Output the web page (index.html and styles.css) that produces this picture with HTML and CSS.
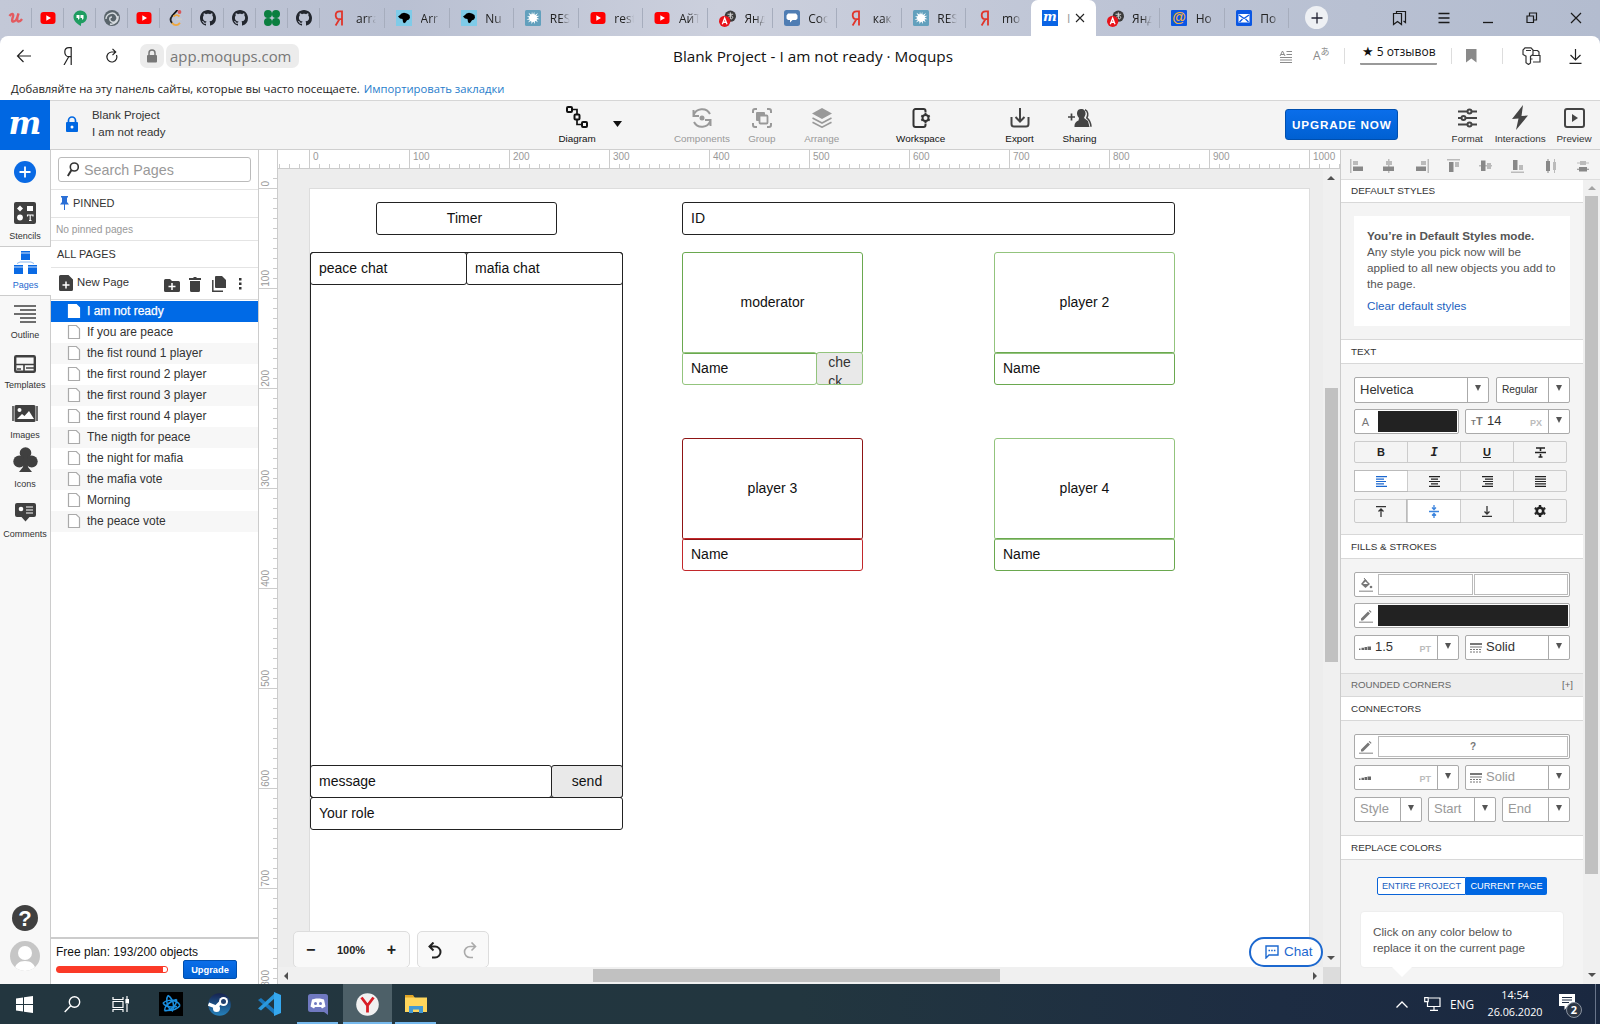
FILE: index.html
```html
<!DOCTYPE html>
<html lang="en">
<head>
<meta charset="utf-8">
<title>Blank Project - I am not ready · Moqups</title>
<link rel="stylesheet" href="styles.css">
</head>
<body>
<svg class="defs" width="0" height="0">
  <symbol id="yt" viewBox="0 0 16 16"><rect x=".5" y="2" width="15" height="12" rx="3" fill="#f00"/><path d="M6.3 5.2v5.6L11 8z" fill="#fff"/></symbol>
  <symbol id="gh" viewBox="0 0 16 16"><path fill="#22262e" d="M8 0C3.58 0 0 3.58 0 8c0 3.54 2.29 6.53 5.47 7.59.4.07.55-.17.55-.38 0-.19-.01-.82-.01-1.49-2.01.37-2.53-.49-2.69-.94-.09-.23-.48-.94-.82-1.13-.28-.15-.68-.52-.01-.53.63-.01 1.08.58 1.23.82.72 1.21 1.87.87 2.33.66.07-.52.28-.87.51-1.07-1.78-.2-3.64-.89-3.64-3.95 0-.87.31-1.59.82-2.15-.08-.2-.36-1.02.08-2.12 0 0 .67-.21 2.2.82.64-.18 1.32-.27 2-.27s1.36.09 2 .27c1.53-1.04 2.2-.82 2.2-.82.44 1.1.16 1.92.08 2.12.51.56.82 1.27.82 2.15 0 3.07-1.87 3.75-3.65 3.95.29.25.54.73.54 1.48 0 1.07-.01 1.93-.01 2.2 0 .21.15.46.55.38A8 8 0 0 0 16 8c0-4.42-3.58-8-8-8"/></symbol>
  <symbol id="ya" viewBox="0 0 16 16"><path d="M11 .5v15M11 1.3H8.600C5.900 1.300 4.700 3 4.700 5.200S6 9.200 8.500 9.200H11M8.400 9.300 4.600 15.500" fill="none" stroke="#e0352b" stroke-width="1.800"/></symbol>
  <symbol id="splat" viewBox="0 0 16 16"><path fill="#7fcbe8" d="M0 0h16v16H0z"/><path fill="#000" d="M2 6.500 4 5 5.500 3.500 8 2.800l3 .7L13.500 5 14 7.500 13 9.500l-2 .7-1.500 2.300L8 13.300 7 12 6.500 9 4 8.500z"/></symbol>
  <symbol id="burst" viewBox="0 0 16 16"><rect width="16" height="16" rx="1.500" fill="#62a0bd"/><path fill="#fff" d="m8 5 1.200-3.200.4 3.400 3.400-2.200-1.800 3 3.300-.2-3 1.700 3 1.800-3.200-.1 1.500 3-3-1.600.2 3.400-1.700-2.700-1.800 2.700-.1-3.300L3 12.500l2.200-3-3.700.4 3-2L2 6.200h3.200L3.500 2.800l3 2L7 1.800z"/><circle cx="8" cy="8" r="3.700" fill="#fff"/></symbol>
  <symbol id="trans" viewBox="0 0 18 18"><circle cx="12" cy="6.500" r="6" fill="#3b3b3b"/><path d="M9 4.500h6M12 2.500v7M9.500 8c2-3 5-2 5 0 0 1-1 1.500-2 1.500" stroke="#ddd" fill="none"/><circle cx="6" cy="12" r="6" fill="#e8131a"/><path d="M3.500 15 6 8.500 8.500 15M4.300 13h3.400" stroke="#fff" stroke-width="1.400" fill="none"/></symbol>
  <symbol id="page" viewBox="0 0 14 16"><path d="M1.500 1.500h7.800l3.200 3.200v9.800h-11z" fill="#fff" stroke="currentColor" stroke-width="1.200"/></symbol>
  <symbol id="pencil" viewBox="0 0 14 14"><path fill="#777" d="M2 9.500 9 2.500l2 2-7 7H2zM9.700 1.800l.9-.9 2 2-.9.900z"/><path fill="#aaa" d="M0 12.500h14V14H0z"/></symbol>
  <symbol id="weight" viewBox="0 0 12 6"><path fill="#666" d="M0 3.500h1.500V5H0zM2.500 2.700H5V5H2.500zM5.500 2H8v3H5.500zM8.500 1.500H12V5H8.500z"/></symbol>
  <symbol id="dashes" viewBox="0 0 12 10"><path fill="#777" d="M0 0h12v2H0zM0 3.500h12v1H0z"/><path stroke="#777" stroke-dasharray="2 1" d="M0 6.500h12M0 9h12"/></symbol>
</svg>

<div class="tabs">
  <div class="tab pin"><svg width="16" height="16" viewBox="0 0 16 16"><path d="M1.500 6c2-3 4.500-2.500 3.500.5s-1.500 5 .5 5 4-4 5-8c-1.500 4-2 8 0 8s2.500-1 3.500-2.500" fill="none" stroke="#e35a5f" stroke-width="2.400"/></svg></div>
  <div class="tab pin"><svg width="16" height="16"><use href="#yt"/></svg></div>
  <div class="tab pin"><svg width="16" height="16" viewBox="0 0 16 16"><path fill="#1f9d61" d="M8 .5a6.500 6.500 0 0 1 1 13V16c-4-2-7.500-5-7.500-9A6.500 6.500 0 0 1 8 .5"/><path fill="#fff" d="M4.500 5h3v3.500L6 10V8H4.500zM8.500 5h3v3.500L10 10V8H8.500z"/></svg></div>
  <div class="tab pin"><svg width="16" height="16" viewBox="0 0 16 16"><circle cx="8" cy="8" r="8" fill="#59646b"/><path d="M2 9c0-5 7-8 10-4s-1 8-4 7-3-5 0-5M14 6c1 5-4 9-8 8" fill="none" stroke="#d5dade" stroke-width="1.400"/></svg></div>
  <div class="tab pin"><svg width="16" height="16"><use href="#yt"/></svg></div>
  <div class="tab pin"><svg width="16" height="16" viewBox="0 0 16 16" fill="none" stroke-width="1.800"><path d="M9.500 0 4 6" stroke="#111"/><path d="M4.300 5.700C2 8.500 2 11 4.300 13" stroke="#222"/><path d="M4 12.800c2.500 3 5.500 3 8 0M5.500 6.500c2-2 4.500-1.500 6 0" stroke="#efa73c"/><path d="M8 9.300h6" stroke="#ccc"/><circle cx="11.500" cy="2" r="1.900" fill="#d8585a"/></svg></div>
  <div class="tab pin"><svg width="16" height="16"><use href="#gh"/></svg></div>
  <div class="tab pin"><svg width="16" height="16"><use href="#gh"/></svg></div>
  <div class="tab pin"><svg width="16" height="16" viewBox="0 0 16 16" fill="#0b7f3f"><circle cx="4" cy="4" r="4"/><circle cx="12" cy="4" r="4"/><circle cx="4" cy="12" r="4"/><circle cx="12" cy="12" r="4"/></svg></div>
  <div class="tab pin"><svg width="16" height="16"><use href="#gh"/></svg></div>
  <div class="tab"><svg width="16" height="16"><use href="#ya"/></svg><span>arra</span></div>
  <div class="tab"><svg width="16" height="16"><use href="#splat"/></svg><span>Arr</span></div>
  <div class="tab"><svg width="16" height="16"><use href="#splat"/></svg><span>Nu</span></div>
  <div class="tab"><svg width="16" height="16"><use href="#burst"/></svg><span>RES</span></div>
  <div class="tab"><svg width="16" height="16"><use href="#yt"/></svg><span>rest</span></div>
  <div class="tab"><svg width="16" height="16"><use href="#yt"/></svg><span>АйТ</span></div>
  <div class="tab"><svg width="17" height="17"><use href="#trans"/></svg><span>Янд</span></div>
  <div class="tab"><svg width="16" height="16" viewBox="0 0 16 16"><rect width="16" height="16" rx="2.500" fill="#4f7db3"/><path fill="#fff" d="M4 3.500h8l1.500 2v3L12 10H8.500L6 12.500V10H4L2.500 8.500v-3z"/></svg><span>Соо</span></div>
  <div class="tab"><svg width="16" height="16"><use href="#ya"/></svg><span>как</span></div>
  <div class="tab"><svg width="16" height="16"><use href="#burst"/></svg><span>RES</span></div>
  <div class="tab last"><svg width="16" height="16"><use href="#ya"/></svg><span>mo</span></div>
  <div class="tab active"><b class="mfav">m</b><i class="cut">I</i><svg width="10" height="10" viewBox="0 0 10 10"><path d="M1 1l8 8M9 1 1 9" stroke="#222" stroke-width="1.100"/></svg></div>
  <div class="tab"><svg width="17" height="17"><use href="#trans"/></svg><span>Янд</span></div>
  <div class="tab"><b class="at">@</b><span>Но</span></div>
  <div class="tab"><svg width="16" height="16" viewBox="0 0 16 16"><rect width="16" height="16" rx="1.500" fill="#0b57e3"/><path fill="#fff" d="M2.500 4h11v8.500h-11z"/><path d="m3 5 5 3.500L13 5M3.500 12l3-3M12.500 12l-3-3" fill="none" stroke="#0b57e3" stroke-width="1.300"/></svg><span>По</span></div>
  <div class="newtab"><svg width="12" height="12"><path d="M6 .5v11M.5 6h11" stroke="#223" stroke-width="1.300"/></svg></div>
  <div class="winbtns">
    <svg width="16" height="16" viewBox="0 0 16 16" fill="none" stroke="#1a1a1a" stroke-width="1.200"><path d="M5.500 3.500V1.500h9v11l-2-1.500M2.500 3.500h8v11L6.500 11.500l-4 3z"/></svg>
    <svg width="12" height="12" stroke="#1a1a1a" stroke-width="1.300"><path d="M.5 1.500h11M.5 6h11M.5 10.500h11"/></svg>
    <svg width="12" height="12" stroke="#1a1a1a" stroke-width="1.300"><path d="M1 10.500h10"/></svg>
    <svg width="12" height="12" fill="none" stroke="#1a1a1a" stroke-width="1.200"><path d="M1 4h6.500v6.500H1zM3.500 4V1h7v7h-3"/></svg>
    <svg width="12" height="12" stroke="#1a1a1a" stroke-width="1.200"><path d="m1 1 10 10M11 1 1 11"/></svg>
  </div>
</div>

<div class="omni">
  <div class="nav">
    <svg width="16" height="14" fill="none" stroke="#222" stroke-width="1.200"><path d="M15 7H1.500M7.500 1 1.500 7l6 6"/></svg>
    <svg width="10" height="18" fill="none" stroke="#222" stroke-width="1.200"><path d="M8.200 0v18M8.200.7H6C3.200.7 1.800 2.600 1.800 5S3 9.700 6 9.700h2.200M5.700 9.700 1 18"/></svg>
    <svg width="14" height="16" fill="none" stroke="#222" stroke-width="1.200"><path d="M11.500 7A5 5 0 1 1 6.500 4H10M7.500.8 10.700 4 7.500 7.200"/></svg>
    <span class="lockpill"><svg width="12" height="14" viewBox="0 0 12 14"><rect x="1" y="6" width="10" height="7.500" rx="1" fill="#777"/><path d="M3 6.500V4a3 3 0 0 1 6 0v2.500" fill="none" stroke="#777" stroke-width="1.500"/></svg></span>
    <span class="url">app.moqups.com</span>
  </div>
  <div class="doctitle">Blank Project - I am not ready · Moqups</div>
  <div class="omniright">
    <svg class="r1" width="13" height="13" viewBox="0 0 13 13"><path d="M7.500 1.500H13M7.500 4.500H13M1 7.500h12M1 10h12M1 12.500h12M1 6l2.500-5L6 6M2 4.500h3" fill="none" stroke="#8a8a8a"/></svg>
    <span class="r2">A<sup>あ</sup></span>
    <i class="bar"></i>
    <span class="reviews"><b>★</b>5 отзывов</span>
    <i class="bar"></i>
    <svg class="r3" width="11" height="14"><path d="M0 0h10.500v13.500L5.300 9.500 0 13.500z" fill="#8a8a8a"/></svg>
    <i class="bar"></i>
    <svg class="r4" width="19" height="18" viewBox="0 0 19 18" fill="none" stroke="#333" stroke-width="1.200"><path d="M4 9.200v6.500L6.500 17.500 8.500 16V9.200L11 7.500V3L9 .8H3L1 3v4.500zM4 3.500h5M11 3.500h4.500L17 5v3M10.500 8.500H18v6.500h-7M8.500 12h2"/></svg>
    <svg class="r5" width="13" height="15" fill="none" stroke="#222" stroke-width="1.200"><path d="M6.500 0v11M1.500 6l5 5 5-5M.5 14.300h12"/></svg>
  </div>
</div>
<div class="bookmarks"><span>Добавляйте на эту панель сайты, которые вы часто посещаете.</span><a>Импортировать закладки</a></div>

<header class="appbar">
  <div class="logo">m</div>
  <div class="project">
    <svg width="12" height="17" viewBox="0 0 12 17"><rect y="6" width="12" height="10" rx="1" fill="#0067e2"/><path d="M2.500 7V4.500a3.500 3.500 0 0 1 7 0V7" fill="none" stroke="#0067e2" stroke-width="1.700"/><circle cx="6" cy="11" r="1.500" fill="#fff"/></svg>
    <div>Blank Project<br>I am not ready</div>
  </div>
  <div class="tool t-diagram"><svg width="22" height="22" fill="none" stroke="#111" stroke-width="2"><rect x="1" y="1" width="5" height="5" rx="1"/><rect x="8.500" y="8.500" width="5" height="5" rx="1"/><rect x="16" y="16" width="5" height="5" rx="1"/><path d="M6 3.500h5v5M11 13.500v5h5" stroke-width="1.700"/></svg>Diagram</div>
  <svg class="drop" width="9" height="6"><path d="M0 0h9L4.500 6z" fill="#111"/></svg>
  <div class="tool off t-comp"><svg width="20" height="20" viewBox="0 0 20 20" fill="none" stroke="#999" stroke-width="2"><path d="M1.500 7.500A9 9 0 0 1 18 6M18.500 12.500A9 9 0 0 1 2 14M1.500 2v6h5.500M18.500 18v-6H13"/><circle cx="10" cy="10" r="2.500" fill="#999" stroke="none"/></svg>Components</div>
  <div class="tool off t-group"><svg width="20" height="20" viewBox="0 0 20 20" fill="none" stroke="#999" stroke-width="2"><path d="M1 5V3a2 2 0 0 1 2-2h2M15 1h2a2 2 0 0 1 2 2v2M19 15v2a2 2 0 0 1-2 2h-2M5 19H3a2 2 0 0 1-2-2v-2"/><rect x="4" y="4" width="9" height="9" rx="1" fill="#999" stroke="none"/><rect x="7.500" y="7.500" width="8" height="8" rx="1" fill="#f4f4f4" stroke-width="1.800"/></svg>Group</div>
  <div class="tool off t-arr"><svg width="20" height="20" viewBox="0 0 20 20"><path fill="#999" d="m10 0 10 5.500L10 11 0 5.500z"/><path d="m.5 10 9.500 5 9.500-5M.5 14.200l9.500 5 9.500-5" fill="none" stroke="#999" stroke-width="1.600"/></svg>Arrange</div>
  <div class="tool t-work"><svg width="20" height="20" viewBox="0 0 20 20" fill="none" stroke="#333" stroke-width="2"><path d="M14.500 4.500V3a2 2 0 0 0-2-2h-8a2 2 0 0 0-2 2v14a2 2 0 0 0 2 2h8a2 2 0 0 0 2-2v-1.500"/><circle cx="14.500" cy="10" r="3"/><path d="M14.500 5v2M14.500 13v2M10.300 7.500l1.300.8M18.700 7.500l-1.300.8M10.300 12.500l1.300-.8M18.700 12.500l-1.300-.8"/></svg>Workspace</div>
  <div class="tool t-exp"><svg width="20" height="20" viewBox="0 0 20 20" fill="none" stroke="#444" stroke-width="2"><path d="M10 0v13M5.500 9l4.500 4.500L14.500 9M1.500 9v7a2.500 2.500 0 0 0 2.500 2.500h12a2.500 2.500 0 0 0 2.500-2.500V9"/></svg>Export</div>
  <div class="tool t-share"><svg width="24" height="18" viewBox="0 0 24 18"><path d="M0 8h7M3.500 4.500v7" stroke="#444" stroke-width="1.700"/><path fill="#444" d="M13 0c3 0 5 2 4.500 5.500L16 9l4 3 1.500 6H6.500c0-3 .5-5 4-6.500L11 9C7.500 5 9 0 13 0"/><path d="M17 .8c3 1 3.500 5 1.800 8 2.500 2 4 5 4.200 9" fill="none" stroke="#444" stroke-width="1.500"/></svg>Sharing</div>
  <button class="upgrade">UPGRADE NOW</button>
  <div class="tool t-fmt"><svg width="19" height="20" viewBox="0 0 19 20" fill="#f4f4f4" stroke="#444" stroke-width="2"><path d="M0 3.500h19M0 10h19M0 16.500h19"/><circle cx="11.500" cy="3.500" r="2"/><circle cx="5.500" cy="10" r="2"/><circle cx="11.500" cy="16.500" r="2"/></svg>Format</div>
  <div class="tool t-int"><svg width="18" height="25" viewBox="0 0 18 25"><path fill="#444" d="M12 0 1 14l6.500-.5L5 25l12-14.500-6.500.5z"/></svg>Interactions</div>
  <div class="tool t-prev"><svg width="21" height="20" viewBox="0 0 21 20"><rect x="1" y="1" width="19" height="18" rx="2" fill="none" stroke="#444" stroke-width="2"/><path fill="#444" d="M8 6v8l6-4z"/></svg>Preview</div>
</header>

<main class="workspace">
  <nav class="rail">
    <div class="plus"><svg width="22" height="22"><circle cx="11" cy="11" r="11" fill="#0a6ae4"/><path d="M11 5.500v11M5.500 11h11" stroke="#fff" stroke-width="1.800"/></svg></div>
    <div class="item"><svg width="22" height="22"><rect width="22" height="22" rx="2" fill="#404040"/><path d="M6 3.500 9 6.500 6 9.500 3 6.500zM13 4h6v5h-6z" fill="#fff"/><circle cx="6" cy="15.500" r="2.900" fill="#fff"/><path d="M13.500 14.500V13h5.500v1.500M16.200 13v5.500M15 18.500h2.500" fill="none" stroke="#fff" stroke-width="1.100"/></svg>Stencils</div>
    <div class="item on"><svg width="23" height="23" fill="#0a6ae4"><path d="M7 0h9v9H7zM0 14h9v9H0zM14 14h9v9h-9z"/><path d="M3 12.500 6 11h11l3 1.500" fill="none" stroke="#8ab8ef"/><path d="M7 2h9M0 16h9M14 16h9" stroke="#fff" stroke-width=".8"/></svg>Pages</div>
    <div class="item"><svg width="22" height="18" stroke="#404040" stroke-width="1.700"><path d="M0 1h22M6 5h16M0 9h22M6 13h16M6 17h16"/></svg>Outline</div>
    <div class="item"><svg width="22" height="18" fill="none" stroke="#404040" stroke-width="2.400"><rect x="1.200" y="1.200" width="19.600" height="15.600" rx="1"/><path d="M1 9.500h20M10 9v8M12 13h9M3 14h4" stroke-width="1.600"/></svg>Templates</div>
    <div class="item"><svg width="26" height="18"><rect x="2.500" width="21" height="17" rx="1.500" fill="#404040"/><path d="M1 1v15M25 1v15" stroke="#404040" stroke-width="1.500"/><path d="m5 14 5-5 2.500 2L17 6l5 8z" fill="#fff"/><circle cx="7.500" cy="5" r="2" fill="#fff"/></svg>Images</div>
    <div class="item"><svg width="25" height="25" fill="#404040"><circle cx="12.500" cy="6" r="5.800"/><circle cx="6.300" cy="14.500" r="6"/><circle cx="18.700" cy="14.500" r="6"/><path d="M11 8h3l1 12 4 5H6l4-5z"/></svg>Icons</div>
    <div class="item"><svg width="21" height="19"><path fill="#404040" d="M2 0h17a2 2 0 0 1 2 2v10a2 2 0 0 1-2 2h-4.500l-4 4.500-4-4.500H2a2 2 0 0 1-2-2V2a2 2 0 0 1 2-2"/><circle cx="6" cy="6" r="2.300" fill="#fff"/><path d="M11 4h7M11 7h7M11 10h7" stroke="#fff" stroke-width="1.200"/></svg>Comments</div>
    <div class="bottom">
      <div class="help">?</div>
      <svg width="30" height="30"><defs><clipPath id="av"><circle cx="15" cy="15" r="15"/></clipPath></defs><g clip-path="url(#av)"><path fill="#c6c6c6" d="M0 0h30v30H0z"/><circle cx="15" cy="12" r="7" fill="#fff"/><path d="M4 30c1-7 5-10 11-10s10 3 11 10z" fill="#fff"/></g></svg>
    </div>
  </nav>

  <aside class="pages">
    <div class="searchrow"><div class="search"><svg width="12" height="15" fill="none" stroke="#333" stroke-width="1.600"><circle cx="7.300" cy="5" r="4"/><path d="M4.500 8 .8 14" stroke-width="2"/></svg>Search Pages</div></div>
    <div class="pinned"><svg width="9" height="14" fill="#2a6fd6"><path d="M1 0h7v1.500H7V6l2 2.500H5V14H4V8.500H0L2 6V1.500H1z"/></svg>PINNED</div>
    <div class="nopin">No pinned pages</div>
    <div class="all">ALL PAGES</div>
    <div class="newrow">
      <svg class="n0" width="14" height="16"><path fill="#404040" d="M1.500 0h8L14 4.500v10a1.500 1.500 0 0 1-1.500 1.500h-11A1.500 1.500 0 0 1 0 14.500v-13A1.500 1.500 0 0 1 1.500 0"/><path d="M7 6.500v7M3.500 10h7" stroke="#fff" stroke-width="1.500"/></svg>
      <span>New Page</span>
      <svg class="n1" width="16" height="13"><path fill="#404040" d="M1.500 0H6l2 2h6.500A1.500 1.500 0 0 1 16 3.500v8a1.500 1.500 0 0 1-1.500 1.500h-13A1.500 1.500 0 0 1 0 11.500v-10A1.500 1.500 0 0 1 1.500 0"/><path d="M8 4v7M4.500 7.500h7" stroke="#fff" stroke-width="1.500"/></svg>
      <svg class="n2" width="12" height="15" fill="#404040"><path d="M0 1h4l1-1h2l1 1h4v2H0zM1 4h10v9.500a1.500 1.500 0 0 1-1.500 1.500h-7A1.500 1.500 0 0 1 1 13.500z"/></svg>
      <svg class="n3" width="14" height="16"><path fill="#404040" d="M4 0h6l4 4v8H4a1 1 0 0 1-1-1V1a1 1 0 0 1 1-1"/><path d="M.8 4v11.200H11" fill="none" stroke="#404040" stroke-width="1.500"/></svg>
      <svg class="n4" width="3" height="12" fill="#333"><path d="M0 0h2.500v2.500H0zM0 4.500h2.500V7H0zM0 9h2.500v2.500H0z"/></svg>
    </div>
    <div class="list">
      <div class="sel"><svg width="14" height="16"><use href="#page"/></svg>I am not ready</div>
      <div><svg width="14" height="16"><use href="#page"/></svg>If you are peace</div>
      <div><svg width="14" height="16"><use href="#page"/></svg>the fist round 1 player</div>
      <div><svg width="14" height="16"><use href="#page"/></svg>the first round 2 player</div>
      <div><svg width="14" height="16"><use href="#page"/></svg>the first round 3 player</div>
      <div><svg width="14" height="16"><use href="#page"/></svg>the first round 4 player</div>
      <div><svg width="14" height="16"><use href="#page"/></svg>The nigth for peace</div>
      <div><svg width="14" height="16"><use href="#page"/></svg>the night for mafia</div>
      <div><svg width="14" height="16"><use href="#page"/></svg>the mafia vote</div>
      <div><svg width="14" height="16"><use href="#page"/></svg>Morning</div>
      <div><svg width="14" height="16"><use href="#page"/></svg>the peace vote</div>
    </div>
    <div class="plan">
      <div class="plantext">Free plan: 193/200 objects</div>
      <div class="planrow"><div class="meter"><i style="width:96.500%"></i></div><button>Upgrade</button></div>
    </div>
  </aside>

  <section class="board">
    <div class="hruler"><div class="hlabels"><span>0</span><span>100</span><span>200</span><span>300</span><span>400</span><span>500</span><span>600</span><span>700</span><span>800</span><span>900</span><span>1000</span></div></div>
    <div class="vruler"><div class="vlabels"><span class="zero">0</span><span>100</span><span>200</span><span>300</span><span>400</span><span>500</span><span>600</span><span>700</span><span>800</span></div></div>
    <div class="view">
      <div class="sheet">
        <div class="box mid timer" style="left:66px;top:13px;width:181px;height:33px">Timer</div>
        <div class="box" style="left:0;top:63px;width:313px;height:546px"></div>
        <div class="box" style="left:0;top:63px;width:157px;height:33px">peace chat</div>
        <div class="box" style="left:156px;top:63px;width:157px;height:33px">mafia chat</div>
        <div class="box" style="left:0;top:576px;width:242px;height:33px">message</div>
        <div class="box mid grey" style="left:241px;top:576px;width:72px;height:33px">send</div>
        <div class="box" style="left:0;top:608px;width:313px;height:33px">Your role</div>
        <div class="box" style="left:372px;top:13px;width:493px;height:33px">ID</div>
        <div class="box mid green" style="left:372px;top:63px;width:181px;height:102px">moderator</div>
        <div class="box mid check" style="left:506px;top:163px;width:47px;height:33px">che<br>ck</div>
        <div class="box lime" style="left:372px;top:163px;width:135px;height:33px">Name</div>
        <div class="box mid lime" style="left:684px;top:63px;width:181px;height:102px">player 2</div>
        <div class="box green" style="left:684px;top:163px;width:181px;height:33px">Name</div>
        <div class="box mid maroon" style="left:372px;top:249px;width:181px;height:102px">player 3</div>
        <div class="box red" style="left:372px;top:349px;width:181px;height:33px">Name</div>
        <div class="box mid lime" style="left:684px;top:249px;width:181px;height:102px">player 4</div>
        <div class="box green" style="left:684px;top:349px;width:181px;height:33px">Name</div>
      </div>
      <div class="zoomctl"><b>−</b><span>100%</span><b>+</b></div>
      <div class="undoctl">
        <svg width="14" height="17" fill="none" stroke="#222" stroke-width="2"><path d="M5.500.5 1.500 4.500l4 4M1.500 4.500H7a5.500 5.500 0 0 1 0 11H4"/></svg>
        <svg width="14" height="17" fill="none" stroke="#aaa" stroke-width="1.600"><path d="M8.500.5l4 4-4 4M12.500 4.500H7a5.500 5.500 0 0 0 0 11h3"/></svg>
      </div>
      <div class="chat"><svg width="14" height="14" fill="none" stroke="#1c68cf" stroke-width="1.400"><path d="M1 13V1h12v9H4z"/><path d="M3.500 5.500h7" stroke-dasharray="1.500 1.200"/></svg>Chat</div>
    </div>
    <div class="vscroll"><i class="up"></i><i class="vthumb"></i><i class="down"></i></div>
    <div class="hscroll"><i class="left"></i><i class="hthumb"></i><i class="right"></i></div>
    <div class="corner"></div>
  </section>

  <aside class="inspector">
    <div class="aligns">
      <svg width="14" height="14"><path fill="#bbb" d="M0 0h1.500v14H0zM3 2h5v4H3z"/><path fill="#888" d="M3 7.500h10V12H3z"/></svg>
      <svg width="14" height="14"><path fill="#bbb" d="M6 0h1.500v14H6zM4 2h6v4H4z"/><path fill="#888" d="M1 7.500h11V12H1z"/></svg>
      <svg width="14" height="14"><path fill="#bbb" d="M12.500 0H14v14h-1.500zM6 2h5v4H6z"/><path fill="#888" d="M1 7.500h10V12H1z"/></svg>
      <svg width="14" height="14"><path fill="#bbb" d="M0 0h13v1.500H0zM8 3h4v5H8z"/><path fill="#888" d="M2 3h4.500v10H2z"/></svg>
      <svg width="14" height="14"><path fill="#bbb" d="M0 6h13v1.500H0zM8 4h4v6H8z"/><path fill="#888" d="M2 1.500h4.500V12H2z"/></svg>
      <svg width="14" height="14"><path fill="#bbb" d="M0 12.500h13V14H0zM8 6h4v5H8z"/><path fill="#888" d="M2 1h4.500v10H2z"/></svg>
      <svg width="14" height="14"><path fill="#888" d="M2 2h4v10H2zM3.500 0H4.500v14H3.500z"/><path fill="#bbb" d="M9 3h3v8H9zM10 0h1v14h-1z"/></svg>
      <svg width="14" height="14"><path fill="#bbb" d="M1 3.500h12v1H1zM4 2h6v4H4z"/><path fill="#888" d="M3 8h8v4.500H3zM1 9.700h12v1H1z"/></svg>
    </div>
    <div class="inspbody">
      <div class="inspcol">
        <h3>DEFAULT STYLES</h3>
        <div class="sec s1"><div class="card"><b>You’re in Default Styles mode.</b><br>Any style you pick now will be applied to all new objects you add to the page.<a>Clear default styles</a></div></div>
        <h3>TEXT</h3>
        <div class="sec s2">
          <div class="row"><div class="field f135"><span>Helvetica</span><i class="dd"></i></div><div class="field f74 small"><span>Regular</span><i class="dd"></i></div></div>
          <div class="row"><div class="field f105 sw"><em>A</em><i class="swatch dark"></i></div><div class="field f105"><em class="tt"><small>T</small>T</em><span>14</span><u>PX</u><i class="dd"></i></div></div>
          <div class="seg"><b>B</b><b class="it">I</b><b class="un">U</b><b><svg width="11" height="12" stroke="#222" stroke-width="1.600"><path d="M1 2h9M5.500 2v3M0 6.500h11M5.500 8v3M3.500 11h4"/></svg></b></div>
          <div class="seg"><b class="hl"><svg width="11" height="11" stroke="#1c68cf" stroke-width="1.200"><path d="M0 .7h11M0 3.100h8M0 5.500h10M0 7.900h8M0 10.300h11"/></svg></b><b><svg width="11" height="11" stroke="#222" stroke-width="1.200"><path d="M0 .7h11M2 3.100h7M0 5.500h11M2 7.900h7M0 10.300h11"/></svg></b><b><svg width="11" height="11" stroke="#222" stroke-width="1.200"><path d="M0 .7h11M3 3.100h8M1 5.500h10M3 7.900h8M0 10.300h11"/></svg></b><b><svg width="11" height="11" stroke="#222" stroke-width="1.200"><path d="M0 .7h11M0 3.100h11M0 5.500h11M0 7.900h11M0 10.300h11"/></svg></b></div>
          <div class="seg tall"><b><svg width="10" height="11" fill="none" stroke="#333" stroke-width="1.300"><path d="M0 .7h10M5 11V3M2.500 5.500 5 3l2.500 2.500"/></svg></b><b class="hl"><svg width="10" height="13" fill="none" stroke="#3a83dd" stroke-width="1.300"><path d="M0 6.500h10M5 0v4M3 2.500l2 2 2-2M5 13V9M3 10.500l2-2 2 2"/></svg></b><b><svg width="10" height="11" fill="none" stroke="#333" stroke-width="1.300"><path d="M0 10.300h10M5 0v8M2.500 5.500 5 8l2.500-2.500"/></svg></b><b><svg width="12" height="12" viewBox="0 0 12 12"><circle cx="6" cy="6" r="3.200" fill="none" stroke="#222" stroke-width="2.600"/><path d="M6 0v2M6 10v2M.8 3l1.700 1M9.500 8l1.700 1M.8 9l1.700-1M9.500 4l1.700-1" stroke="#222" stroke-width="2.400"/></svg></b></div>
        </div>
        <h3>FILLS &amp; STROKES</h3>
        <div class="sec s3">
          <div class="row"><div class="field f216 sw"><em><svg width="14" height="14"><path fill="#777" d="m6 1 5 5-4.500 4L2 6z"/><path d="M5 0 7.500 3" stroke="#777"/><circle cx="12" cy="9" r="1.300" fill="#777"/><path d="M4 6h5L6.500 3.500z" fill="#fff"/><path fill="#aaa" d="M0 12.500h14V14H0z"/></svg></em><i class="swatch"></i><i class="swatch"></i></div></div>
          <div class="row"><div class="field f216 sw"><em><svg width="14" height="14"><use href="#pencil"/></svg></em><i class="swatch dark"></i></div></div>
          <div class="row"><div class="field f105 w"><em><svg width="12" height="6"><use href="#weight"/></svg></em><span>1.5</span><u>PT</u><i class="dd"></i></div><div class="field f105 w"><em><svg width="12" height="10"><use href="#dashes"/></svg></em><span>Solid</span><i class="dd"></i></div></div>
        </div>
        <h3 class="dim">ROUNDED CORNERS<span>[+]</span></h3>
        <h3 class="noline">CONNECTORS</h3>
        <div class="sec s4">
          <div class="row"><div class="field f216 sw"><em><svg width="14" height="14"><use href="#pencil"/></svg></em><i class="swatch">?</i></div></div>
          <div class="row"><div class="field f105 w"><em><svg width="12" height="6"><use href="#weight"/></svg></em><span></span><u>PT</u><i class="dd"></i></div><div class="field f105 w pale"><em><svg width="12" height="10"><use href="#dashes"/></svg></em><span>Solid</span><i class="dd"></i></div></div>
          <div class="row"><div class="field f68 pale"><span>Style</span><i class="dd"></i></div><div class="field f68 pale"><span>Start</span><i class="dd"></i></div><div class="field f68 pale"><span>End</span><i class="dd"></i></div></div>
        </div>
        <h3>REPLACE COLORS</h3>
        <div class="sec s5">
          <div class="switch"><span>ENTIRE PROJECT</span><b>CURRENT PAGE</b></div>
          <div class="tip">Click on any color below to replace it on the current page</div>
        </div>
      </div>
      <div class="iscroll"><i class="up pale"></i><i class="ithumb"></i><i class="down"></i></div>
    </div>
  </aside>
</main>

<footer class="taskbar">
  <div class="app"><svg width="17" height="17" fill="#fff"><path d="M0 2.400 7 1.400V8H0zM8 1.200 17 0v8H8zM0 9h7v6.600l-7-1zM8 9h9v8l-9-1.200z"/></svg></div>
  <div class="app"><svg width="17" height="17" fill="none" stroke="#fff" stroke-width="1.400"><circle cx="10.500" cy="6" r="5.200"/><path d="M6.700 9.700.7 16"/></svg></div>
  <div class="app tv"><svg width="17" height="17" fill="none" stroke="#fff" stroke-width="1.200"><path d="M1 1v2.500h10V1M1 16v-2.500h10V16M1 5.500h10v6H1zM15 0v3M15 8v8"/><path d="M14 3.500h2.500V7H14z" fill="#fff"/></svg></div>
  <div class="app"><svg width="24" height="24"><path d="M0 0h24v24H0z"/><g fill="none" stroke="#1b8fe0" stroke-width="1.500"><path d="M9 3.500c3 1.500 5.500 6 5.500 10.500 0 2-.5 4-1.500 5.500M9 3.500C7 6 7 13 11 17.500"/><path d="M4 11c3-3 9-3.500 13-1.500 2 1 3.500 2.500 4 4M4 11c2 3 7 5 14 3.500"/><path d="M5.500 18.500c2 1 8-1 11-6 1-2 1.500-3.500 1-5M5.500 18.500c0-3 3-8.500 12-11M21 13.500c-2 3-7 5.500-15.500 5"/></g></svg></div>
  <div class="app"><svg width="23" height="23"><defs><linearGradient id="st" x1="0" y1="0" x2="0" y2="1"><stop offset="0" stop-color="#16224f"/><stop offset="1" stop-color="#2582bd"/></linearGradient></defs><circle cx="11.500" cy="11.500" r="11.300" fill="url(#st)"/><path d="M.5 11 8 14l6-6" stroke="#fff" stroke-width="3.500" fill="none"/><circle cx="15.500" cy="8.500" r="4.500" fill="#fff"/><circle cx="15.500" cy="8.500" r="2.500" fill="#22406f"/><circle cx="8.500" cy="15.500" r="3.500" fill="#fff"/></svg></div>
  <div class="app"><svg width="24" height="24"><path d="m1 8 3-2 14 12v5z" fill="#1a78bd"/><path d="M1 16.500 18 1v5L4 18.500z" fill="#2a98dd"/><path d="m17 0 7 3v18l-7 3z" fill="#35a8ef"/></svg></div>
  <div class="app run"><svg width="20" height="22"><path d="M2.500 1h15A2.500 2.500 0 0 1 20 3.500V22l-4-3H2.500A2.500 2.500 0 0 1 0 16.500v-13A2.500 2.500 0 0 1 2.500 1" fill="#7079c0"/><path d="M4 6.500 8 5.500h4l4 1 1.500 7L14 15.500l-1-1.500H7l-1 1.500-3.500-2z" fill="#fff"/><circle cx="7.500" cy="10.500" r="1.500" fill="#7079c0"/><circle cx="12.500" cy="10.500" r="1.500" fill="#7079c0"/></svg></div>
  <div class="app run cur"><svg width="23" height="23"><circle cx="11.500" cy="11.500" r="11.300" fill="#f1f1f1"/><path d="m5.500 4.500 6 8 6-8M11.500 12v7.500" fill="none" stroke="#d81e26" stroke-width="2.800"/></svg></div>
  <div class="app run"><svg width="22" height="20"><path d="M0 1h8l2 3H0z" fill="#e0a526"/><path d="M0 3.500h22V18H0z" fill="#ffd65c"/><path d="M4 19v-7h14v7h-4v-3.500H8V19z" fill="#4299d4"/></svg></div>
  <div class="tray">
    <svg class="chev" width="12" height="7" fill="none" stroke="#fff" stroke-width="1.300"><path d="m.5 6.500 5.500-5.500 5.500 5.500"/></svg>
    <svg class="net" width="17" height="14" fill="none" stroke="#fff" stroke-width="1.200"><path d="M5 1h11v8.500H3.500V5M10 10v3M6 13.300h8M.7.7h3.500v4H.7z"/></svg>
    <span class="lang">ENG</span>
    <span class="clock">14:54<br>26.06.2020</span>
    <span class="note"><svg width="16" height="16"><path d="M0 0h16v12H9l-3.500 4v-4H0z" fill="#fff"/><path d="M3 3.500h10M3 6h10M3 8.500h7" stroke="#1c2b42"/></svg><b>2</b></span>
    <i class="peek"></i>
  </div>
</footer>
</body>
</html>
```
FILE: styles.css
```css
* { box-sizing: border-box; }
body {
  margin: 0; width: 1600px; height: 1024px; overflow: hidden;
  display: flex; flex-direction: column;
  font: 12px/16px "Liberation Sans", Arial, sans-serif; color: #333; background: #fff;
}
svg { display: block; flex: none; }
.defs { position: absolute; }
i, em { font-style: normal; }
u { text-decoration: none; }
button { font-family: inherit; padding: 0; }

/* browser chrome */
.tabs { height: 45px; margin-bottom: -9px; flex: none; display: flex; align-items: flex-start; background: linear-gradient(90deg, #c3c8d7, #b9c0d2 25%, #ccd0dd 45%, #bdc4d5 70%, #b3bccf); }
.tab { width: 64.600px; height: 36px; display: flex; align-items: center; padding-left: 11px; position: relative; flex: none; font: 12px "Open Sans", "Noto Sans", sans-serif; color: #222; }
.tab::after { content: ""; position: absolute; right: 0; top: 8px; width: 1px; height: 20px; background: #a6adbd; }
.tab span { margin-left: 8.500px; width: 20px; white-space: nowrap; -webkit-mask-image: linear-gradient(90deg, #000 50%, transparent); }
.tab.pin { width: 32.050px; padding-left: 8px; }
.tab.active { background: #fff; border-radius: 7px 7px 0 0; }
.tab.active::after, .tab.last::after { display: none; }
.mfav { width: 16px; height: 16px; background: #0a64e4; color: #fff; font: italic bold 13px/14px "DejaVu Serif", serif; text-align: center; }
.cut { width: 3px; margin: 0 5px 0 9px; color: #999; }
.at { width: 16px; height: 16px; background: #0b57e3; color: #f3b13c; font: bold 14px/15px "Liberation Sans", sans-serif; text-align: center; border-radius: 1px; }
.newtab { width: 23px; height: 23px; margin: 6px 0 0 16px; border-radius: 50%; background: #eef0f4; display: grid; place-items: center; }
.winbtns { margin-left: 63px; height: 36px; display: flex; align-items: center; gap: 32px; }
.winbtns svg:first-child { margin-right: -1px; }
.omni { height: 40px; flex: none; display: flex; background: #fff; border-radius: 8px 8px 0 0; position: relative; }
.nav { width: 673px; display: flex; align-items: center; padding-left: 16px; }
.nav svg:nth-child(2) { margin-left: 31px; }
.nav svg:nth-child(3) { margin-left: 32px; }
.lockpill { width: 24px; height: 24px; margin-left: 21px; background: #ececec; border-radius: 7px; display: grid; place-items: center; }
.url { width: 133px; height: 24px; margin-left: 2px; padding-left: 4px; background: #ececec; border-radius: 7px; font: 14.900px/24px "Open Sans", sans-serif; color: #777; }
.doctitle { width: 606px; font: 15.300px/40px "Open Sans", sans-serif; color: #111; white-space: nowrap; }
.omniright { display: flex; align-items: center; color: #888; }
.omniright .bar { width: 1px; height: 16px; background: #ddd; }
.r2 { width: 19px; margin: 0 12px 0 21px; font: 12px/20px "Open Sans", sans-serif; white-space: nowrap; }
.r2 sup { font: 9px/9px "Noto Sans CJK JP", sans-serif; }
.reviews { width: 77px; height: 20px; margin: -2px 14px 0 15px; border-bottom: 2.500px solid #999; border-radius: 1px; font: 12px/14px "Open Sans", sans-serif; color: #111; white-space: nowrap; padding-left: 2px; }
.reviews b { margin-right: 3px; font: 13px/14px "DejaVu Sans", sans-serif; }
.r3 { margin: 0 25px 0 14px; }
.r4 { margin-left: 19px; }
.r5 { margin-left: 28px; }
.bookmarks { height: 24px; flex: none; padding-left: 11px; display: flex; gap: 4px; font: 11.250px/26px "Open Sans", sans-serif; color: #222; white-space: nowrap; }
.bookmarks a { color: #1f7dcb; }

/* application header */
.appbar { height: 50px; flex: none; display: flex; background: #f4f4f4; border-top: 1px solid #d6d6d6; border-bottom: 1px solid #cfcfcf; }
.logo { width: 50px; height: 50px; margin-top: -1px; background: #0067e2; color: #fff; font: italic bold 31px/46px "DejaVu Serif", serif; text-align: center; z-index: 1; }
.project { width: 482px; padding: 6px 0 0 16px; display: flex; gap: 14px; font-size: 11.500px; line-height: 17px; }
.project svg { margin-top: 9px; }
.tool { width: 60px; height: 48px; display: flex; flex-direction: column; align-items: center; justify-content: flex-end; gap: 4px; padding-bottom: 4px; font-size: 9.900px; line-height: 12px; color: #111; white-space: nowrap; }
.tool svg { margin-bottom: 1px; }
.off { color: #999; }
.t-diagram { width: 92px; }
.drop { margin: 20px 0 0 -10px; }
.t-comp { margin-left: 50px; }
.t-work { margin-left: 39px; }
.t-exp { margin-left: 39px; }
.t-share svg { margin-bottom: 2px; }
.upgrade { width: 113px; height: 31px; margin: 8px 0 0 176px; border: 1px solid #004fae; border-radius: 3px; background: linear-gradient(#0a6eea, #0060d2); color: #fff; font-size: 11.700px; font-weight: bold; letter-spacing: .85px; white-space: nowrap; }
.t-fmt { width: 50px; margin-left: 44px; color: #333; }
.t-int { width: 56px; color: #333; }
.t-int svg { margin-bottom: -1px; }
.t-prev { width: 52px; color: #333; }

.workspace { height: 834px; flex: none; display: flex; }
.rail { width: 51px; background: #f8f8f8; border-right: 1px solid #ccc; display: flex; flex-direction: column; }
.plus { height: 46px; padding: 11px 0 0 14px; }
.item { height: 49.800px; width: 50px; display: flex; flex-direction: column; align-items: center; justify-content: flex-end; gap: 6px; padding-bottom: 4.300px; font-size: 9px; line-height: 12px; flex: none; }
.item.on { width: 51px; background: #fff; color: #1c68cf; border: solid #ccc; border-width: 1px 0; padding-bottom: 3.500px; gap: 5px; }
.bottom { margin-top: auto; padding: 0 0 13px 10px; }
.help { width: 26px; height: 26px; margin: 0 0 10px 2px; border-radius: 50%; background: #404040; color: #fff; font: bold 22px/27px "Liberation Sans", sans-serif; text-align: center; }

.pages { width: 207px; display: flex; flex-direction: column; background: #fff; }
.searchrow { height: 40px; padding: 7px; border-bottom: 1px solid #e4e4e4; }
.search { width: 193px; height: 25px; border: 1px solid #bbb; border-radius: 3px; display: flex; align-items: center; padding-left: 8px; gap: 5px; font-size: 14.300px; color: #999; }
.pinned { height: 28px; border-bottom: 1px solid #e4e4e4; display: flex; align-items: center; gap: 4px; padding: 0 0 2px 9px; font-size: 11px; }
.nopin { height: 23px; border-bottom: 1px solid #e4e4e4; padding-left: 5px; font-size: 10.200px; line-height: 24px; color: #999; }
.all { height: 27px; border-bottom: 1px solid #e4e4e4; padding-left: 6px; font-size: 10.900px; line-height: 26px; }
.newrow { height: 32px; border-bottom: 1px solid #ddd; display: flex; align-items: center; padding-left: 8px; }
.newrow span { width: 91px; margin: -3px 0 0 4px; font-size: 11.300px; }
.newrow svg { margin-top: 1px; }
.newrow .n0 { margin-top: -2px; }
.n1 { margin-left: -4px; }
.n2 { margin-left: 9px; }
.newrow .n1 { margin-top: 4px; }
.n3 { margin-left: 11px; }
.n4 { margin-left: 13px; }
.list { padding-top: 1px; flex: 1; }
.list div { height: 21px; display: flex; align-items: center; gap: 6px; padding: 0 0 2px 16px; }
.list div:nth-child(2n+1) { background: #f7f7f7; }
.list svg { color: #aaa; margin-top: 1px; }
.list .sel { background: #006ae6 !important; color: #fff; -webkit-text-stroke: .25px #fff; }
.list .sel svg { color: #fff; }
.plan { height: 47px; border-top: 2px solid #ccc; padding: 5px 0 0 5px; color: #111; }
.planrow { display: flex; padding-top: 1px; }
.meter { width: 112px; height: 7px; margin-top: 5px; border: 1px solid #fb3a28; border-radius: 3px; }
.meter i { display: block; height: 100%; background: #fb3a28; }
.planrow button { width: 54px; height: 19px; margin: -1px 0 0 15px; border: 1px solid #004fae; border-radius: 2px; background: linear-gradient(#0a6eea, #0060d2); color: #fff; font-size: 9.300px; font-weight: bold; }

/* drawing board */
.board { width: 1082px; flex: none; display: grid; grid-template: 19px 798px 17px / 19px 1045px 17px; background: #fff; border-left: 1px solid #ccc; }
.hruler { grid-column: 1 / 4; margin-left: 18px; border-left: 1px solid #ccc; border-bottom: 1px solid #ccc; background: repeating-linear-gradient(90deg, transparent 0 1px, #ccc 1px 2px, transparent 2px 10px) 0 100% / 100% 4px no-repeat; overflow: hidden; }
.hlabels { display: flex; height: 18px; margin-left: 31px; }
.hlabels span { width: 100px; flex: none; border-left: 1px solid #ccc; padding-left: 3px; font-size: 10px; line-height: 14px; color: #999; }
.vruler { grid-row: 2 / 4; grid-column: 1; border-right: 1px solid #ccc; overflow: hidden; background: repeating-linear-gradient(180deg, transparent 0 9px, #ccc 9px 10px) 100% 0 / 4px 100% no-repeat; }
.vlabels { display: flex; flex-direction: column; }
.vlabels span { display: block; width: 18px; height: 100px; flex: none; border-bottom: 1px solid #ccc; writing-mode: sideways-lr; font-size: 10px; line-height: 14px; color: #999; padding-bottom: 1px; }
.vlabels .zero { height: 20px; }
.view { grid-column: 2; grid-row: 2; background: #ededed; position: relative; overflow: hidden; }
.sheet { position: absolute; left: 31px; top: 19px; width: 1001px; height: 800px; background: #fff; border: 1px solid #ddd; }
.box { position: absolute; border: 1.500px solid #222; border-radius: 3px; background: transparent; font-size: 14px; color: #111; padding: 0 0 2px 8px; display: flex; align-items: center; }
.mid { justify-content: center; padding: 0 0 2px; }
.timer { padding-right: 4px; }
.grey { background: #e9e9e9; }
.green { border-color: #6aa84f; }
.lime { border-color: #93c47d; }
.maroon { border-color: #8f1515; }
.red { border-color: #c2282b; }
.check { border-color: #93c47d; background: #e9e9e9; overflow: hidden; align-items: flex-start; line-height: 19px; color: #333; }
.zoomctl, .undoctl { position: absolute; top: 762px; height: 37px; border: 1px solid #ddd; border-radius: 5px; background: #f9f9f9; display: flex; align-items: center; }
.zoomctl { left: 15px; width: 117px; padding: 0 13px 0 12px; justify-content: space-between; font-size: 11px; font-weight: bold; color: #222; }
.zoomctl b { font-size: 16px; }
.undoctl { left: 139px; width: 72px; padding: 2px 11px 0 10px; justify-content: space-between; }
.chat { position: absolute; left: 971px; top: 768px; width: 74px; height: 30px; border: 2px solid #1c68cf; border-radius: 15px; background: #fff; display: flex; align-items: center; gap: 5px; padding-left: 14px; font-size: 13.500px; color: #1c68cf; }
.vscroll, .hscroll, .iscroll { background: #f0f0f0; display: flex; align-items: center; }
.vscroll, .iscroll { flex-direction: column; }
.vscroll i, .hscroll i, .iscroll i { flex: none; }
.hscroll { grid-column: 2; }
.corner { background: #dcdcdc; }
.up, .down { border: solid transparent; border-width: 0 4px; }
.up { border-bottom: 4px solid #505050; }
.down { border-top: 4px solid #505050; margin-top: auto; }
.up.pale { border-bottom-color: #a3a3a3; }
.left, .right { border: solid transparent; border-width: 4px 0; }
.left { border-right: 4px solid #505050; margin-left: 6px; }
.right { border-left: 4px solid #505050; margin: 0 6px 0 auto; }
.vscroll .up { margin: 7px 1px 0 0; }
.vscroll .down { margin: auto 1px 7px 0; }
.vthumb { width: 13px; height: 274px; margin: 208px 0 0; background: #c1c1c1; }
.hthumb { width: 407px; height: 13px; margin-left: 305px; background: #c1c1c1; }

/* format inspector */
.inspector { width: 260px; border-left: 1px solid #ccc; background: #f4f4f4; display: flex; flex-direction: column; }
.aligns { height: 29px; display: flex; align-items: center; padding: 3px 0 0 9px; gap: 18.300px; }
.inspbody { flex: 1; min-height: 0; display: flex; border-top: 1px solid #ddd; }
.inspcol { width: 242px; overflow: hidden; }
.iscroll { width: 17px; }
.iscroll .up { margin-top: 6px; }
.ithumb { width: 13px; height: 678px; margin-top: 6px; background: #c1c1c1; }
.iscroll .down { margin-bottom: 7px; }
h3 { height: 25px; margin: 0; padding-left: 10px; border: solid #d8d8d8; border-width: 1px 0; background: #fff; font-size: 9.900px; font-weight: normal; line-height: 24px; color: #333; display: flex; justify-content: space-between; }
.inspcol h3:first-child { height: 23px; border-top: 0; line-height: 22px; }
h3.dim { height: 24px; background: #ededed; color: #666; padding-right: 10px; font-size: 9.700px; line-height: 22px; }
h3.noline { height: 24px; border-top: 0; }
.sec { padding: 13px 0 0 13px; }
.s1 { height: 136px; }
.card { width: 216px; height: 110px; padding: 12px 13px; background: #fff; color: #555; font-size: 11.700px; }
.card a { display: block; margin-top: 6px; color: #1c5fc0; }
.s2 { height: 170px; }
.s3 { height: 114px; }
.s4 { height: 114px; }
.row { display: flex; width: 216px; justify-content: space-between; margin-bottom: 6px; }
.field { height: 25px; border: 1px solid #aaa; border-radius: 2px; background: #fff; display: flex; font-size: 13px; line-height: 22px; color: #333; }
.field span { padding-left: 5px; flex: 1; }
.field em { width: 21px; display: grid; place-items: center; color: #777; font-size: 11px; }
.sw em { width: 23px; padding-right: 2px; }
.field em + span { padding-left: 0; }
.field u { color: #bbb; font-size: 9px; font-weight: bold; padding: 2px 6px 0 0; }
.f135 { width: 135px; height: 26px; line-height: 24px; }
.f74 { width: 74px; height: 26px; }
.f105 { width: 105px; }
.f216 { width: 216px; }
.f68 { width: 68px; }
.small { font-size: 10.200px; line-height: 24px; }
.w em { width: 20px; }
.pale span { color: #999; }
.dd { width: 21px; border-left: 1px solid #aaa; display: flex; justify-content: center; }
.dd::before { content: ""; margin-top: 7px; height: 0; border: solid transparent; border-width: 0 3.500px; border-top: 6px solid #555; }
.tt { font-weight: bold; display: block !important; padding-left: 5px; width: 21px !important; }
.tt small { font-size: 8px; }
.swatch { flex: 1; margin: 1px 1px 1px 0; border: 1px solid #bbb; text-align: center; font-size: 10px; font-weight: bold; line-height: 20px; color: #777; }
.dark { background: #222; border-color: #222; }
.seg { width: 213px; height: 22px; margin-bottom: 7px; border: 1px solid #ccc; border-radius: 2px; display: flex; }
.row + .seg { margin-top: 7px; }
.seg b { flex: 1; display: grid; place-items: center; font-size: 11px; line-height: 12px; color: #222; }
.seg b + b { border-left: 1px solid #ccc; }
.seg .hl { background: #fff; outline: 1px solid #bbb; }
.seg .it { font: italic bold 12px "Liberation Mono", monospace; padding-top: 2px; }
.seg .un { text-decoration: underline; }
.tall { height: 24px; }
.s3 .row:nth-child(2), .s4 .row:nth-child(2) { margin-bottom: 7px; }
.switch { width: 170px; height: 18px; margin: 4px 0 0 23px; display: flex; font-size: 9.200px; line-height: 16px; text-align: center; white-space: nowrap; }
.switch span { width: 89px; background: #fff; border: 1px solid #0a64d8; border-radius: 2px 0 0 2px; color: #1c5fc0; }
.switch b { width: 81px; background: #0067e2; color: #fff; font-weight: normal; line-height: 18px; border-radius: 0 2px 2px 0; }
.tip { width: 204px; height: 57px; margin: 16px 0 0 6px; padding: 12px 12px; background: #fff; border: 1px solid #eee; border-radius: 4px; color: #555; font-size: 11.700px; position: relative; }
.tip::after { content: ""; position: absolute; left: 31px; top: 55px; border: 10px solid transparent; border-top-color: #fff; border-bottom: 0; }

/* desktop taskbar */
.taskbar { height: 40px; flex: none; display: flex; background: linear-gradient(90deg, #23363f, #22363f 50%, #1d2c42 80%, #1a2840); color: #fff; }
.app { width: 49px; height: 40px; display: grid; place-items: center; flex: none; }
.app:nth-child(2), .app:nth-child(3) { margin-left: -1px; }
.app:nth-child(4) { margin-left: 1px; }
.run { position: relative; }
.run::after { content: ""; position: absolute; left: 4px; right: 4px; bottom: 0; height: 2px; background: #76b9ed; }
.cur { background: #4d6068; margin-left: 1px; }
.cur::after { left: 0; right: 0; }
.cur + .app { margin-left: -1px; }
.tray { margin-left: auto; display: flex; align-items: center; font: 11.800px/17px "Open Sans", sans-serif; }
.chev { margin-right: 2px; }
.net { margin-left: 14px; }
.lang { margin-left: 9px; width: 25px; }
.clock { margin-left: 12px; width: 56px; text-align: center; white-space: nowrap; font-size: 10.800px; margin-top: -2px; }
.note { width: 25px; height: 21px; margin-left: 16px; position: relative; }
.note b { position: absolute; left: 7px; top: 8px; width: 16px; height: 16px; border-radius: 50%; border: 1px solid #8a93a1; background: #2b3544; font: bold 11px/14px "Open Sans", sans-serif; text-align: center; }
.peek { width: 1px; height: 40px; margin: 0 4px 0 11px; background: #68748a; }
```
